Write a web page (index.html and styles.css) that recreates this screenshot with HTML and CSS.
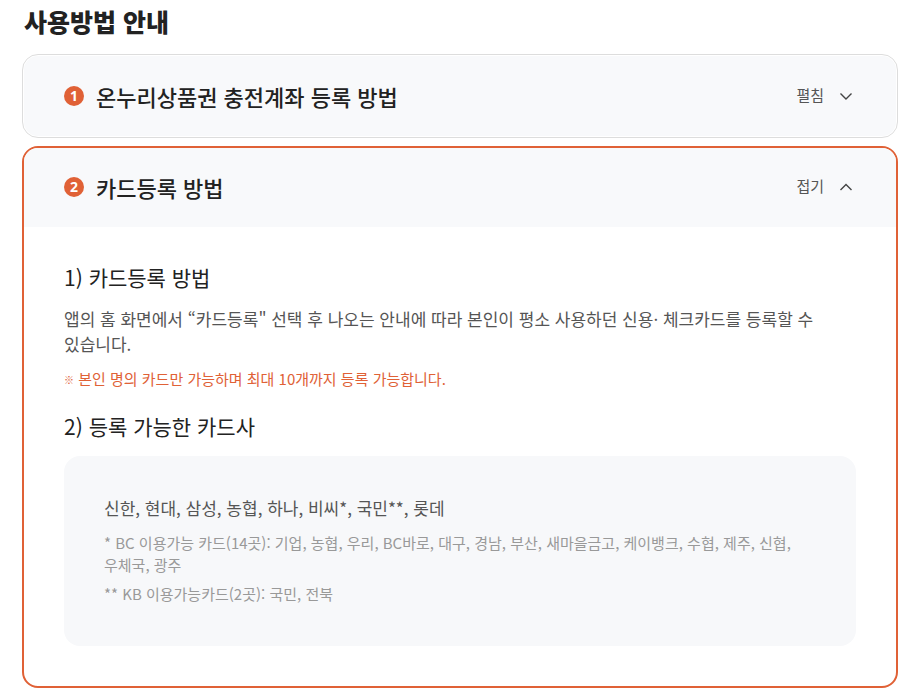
FILE: index.html
```html
<!DOCTYPE html>
<html lang="ko">
<head>
<meta charset="utf-8">
<meta name="viewport" content="width=device-width, initial-scale=1">
<title>사용방법 안내</title>
<link rel="stylesheet" href="styles.css">
</head>
<body>
<main class="guide">
  <h1 class="guide-title">사용방법 안내</h1>
  <section class="panel">
    <h2 class="panel-heading">
      <button class="panel-toggle" type="button" aria-expanded="false">
        <span class="badge">1</span>
        <span class="panel-name">온누리상품권 충전계좌 등록 방법</span>
        <span class="panel-state">펼침</span>
        <svg class="chevron" viewBox="0 0 14 14" aria-hidden="true"><path d="M1.500 4.500 7 10l5.500-5.500"/></svg>
      </button>
    </h2>
  </section>
  <section class="panel panel-open">
    <h2 class="panel-heading">
      <button class="panel-toggle" type="button" aria-expanded="true" aria-controls="card-register">
        <span class="badge">2</span>
        <span class="panel-name">카드등록 방법</span>
        <span class="panel-state">접기</span>
        <svg class="chevron" viewBox="0 0 14 14" aria-hidden="true"><path d="M1.500 10 7 4.500l5.500 5.500"/></svg>
      </button>
    </h2>
    <div class="panel-body" id="card-register">
      <h3 class="step-title">1) 카드등록 방법</h3>
      <p class="step-text">앱의 홈 화면에서 “카드등록" 선택 후 나오는 안내에 따라 본인이 평소 사용하던 신용· 체크카드를 등록할 수 있습니다.</p>
      <p class="notice"><span class="notice-mark">※</span> 본인 명의 카드만 가능하며 최대 10개까지 등록 가능합니다.</p>
      <h3 class="step-title">2) 등록 가능한 카드사</h3>
      <div class="issuers">
        <p class="issuers-list">신한, 현대, 삼성, 농협, 하나, 비씨*, 국민**, 롯데</p>
        <p class="issuers-note">* BC 이용가능 카드(14곳): 기업, 농협, 우리, BC바로, 대구, 경남, 부산, 새마을금고, 케이뱅크, 수협, 제주, 신협, 우체국, 광주</p>
        <p class="issuers-note">** KB 이용가능카드(2곳): 국민, 전북</p>
      </div>
    </div>
  </section>
</main>
</body>
</html>
```

FILE: styles.css
```css
* {
  box-sizing: border-box;
}

body {
  margin: 0;
  background: #fff;
  color: #222;
  font-family: "Noto Sans CJK KR", sans-serif;
  word-break: keep-all;
}

h1, h2, h3, p {
  margin: 0;
}

.guide {
  padding: 3px 9px 4px 22px;
}

.guide-title {
  margin-bottom: 15px;
  padding: 0 2px;
  font-size: 25px;
  font-weight: 900;
  line-height: 36px;
}

.panel {
  padding: 1px;
  border: 1px solid #ddd;
  border-radius: 16px;
  overflow: hidden;
}

.panel-open {
  margin-top: 8px;
  padding: 0;
  border: 2px solid #e06136;
}

.panel-toggle {
  display: flex;
  align-items: center;
  width: 100%;
  height: 80px;
  padding: 0 43px 0 40px;
  border: 0;
  border-radius: 14px;
  background: #f8f9fb;
  color: inherit;
  font: inherit;
  text-align: left;
  cursor: pointer;
}

.panel-open .panel-toggle {
  height: 79px;
  padding-bottom: 2px;
  border-radius: 0;
}

.badge {
  width: 20px;
  height: 20px;
  margin-right: 12px;
  border-radius: 50%;
  background: #e06136;
  color: #fff;
  font-family: "Noto Sans", sans-serif;
  font-size: 14px;
  font-weight: 700;
  line-height: 20px;
  text-align: center;
}

.panel-name {
  flex: 1;
  font-size: 22px;
  font-weight: 500;
  line-height: 32px;
}

.panel-state {
  margin-right: 15px;
  padding-bottom: 2px;
  color: #555;
  font-size: 15px;
  font-weight: 400;
  line-height: 22px;
}

.chevron {
  width: 14px;
  height: 14px;
  fill: none;
  stroke: #444;
  stroke-width: 1.4;
}

.panel-body {
  padding: 34px 40px 40px;
}

.step-title {
  font-size: 21px;
  font-weight: 400;
  line-height: 32px;
}

.step-text {
  margin-top: 13px;
  color: #555;
  font-size: 17px;
  line-height: 25px;
}

.notice {
  margin: 11px 0 18px;
  color: #e06136;
  font-size: 15px;
  line-height: 24px;
}

.notice-mark {
  font-size: 10px;
  font-weight: 700;
  vertical-align: 1px;
}

.issuers {
  margin-top: 14px;
  padding: 39px 40px 41px;
  border-radius: 16px;
  background: #f7f8fa;
}

.issuers-list {
  margin-bottom: 12px;
  color: #555;
  font-size: 17px;
  line-height: 25px;
}

.issuers-note {
  margin-top: 7px;
  color: #999;
  font-size: 15px;
  line-height: 22px;
}
```
